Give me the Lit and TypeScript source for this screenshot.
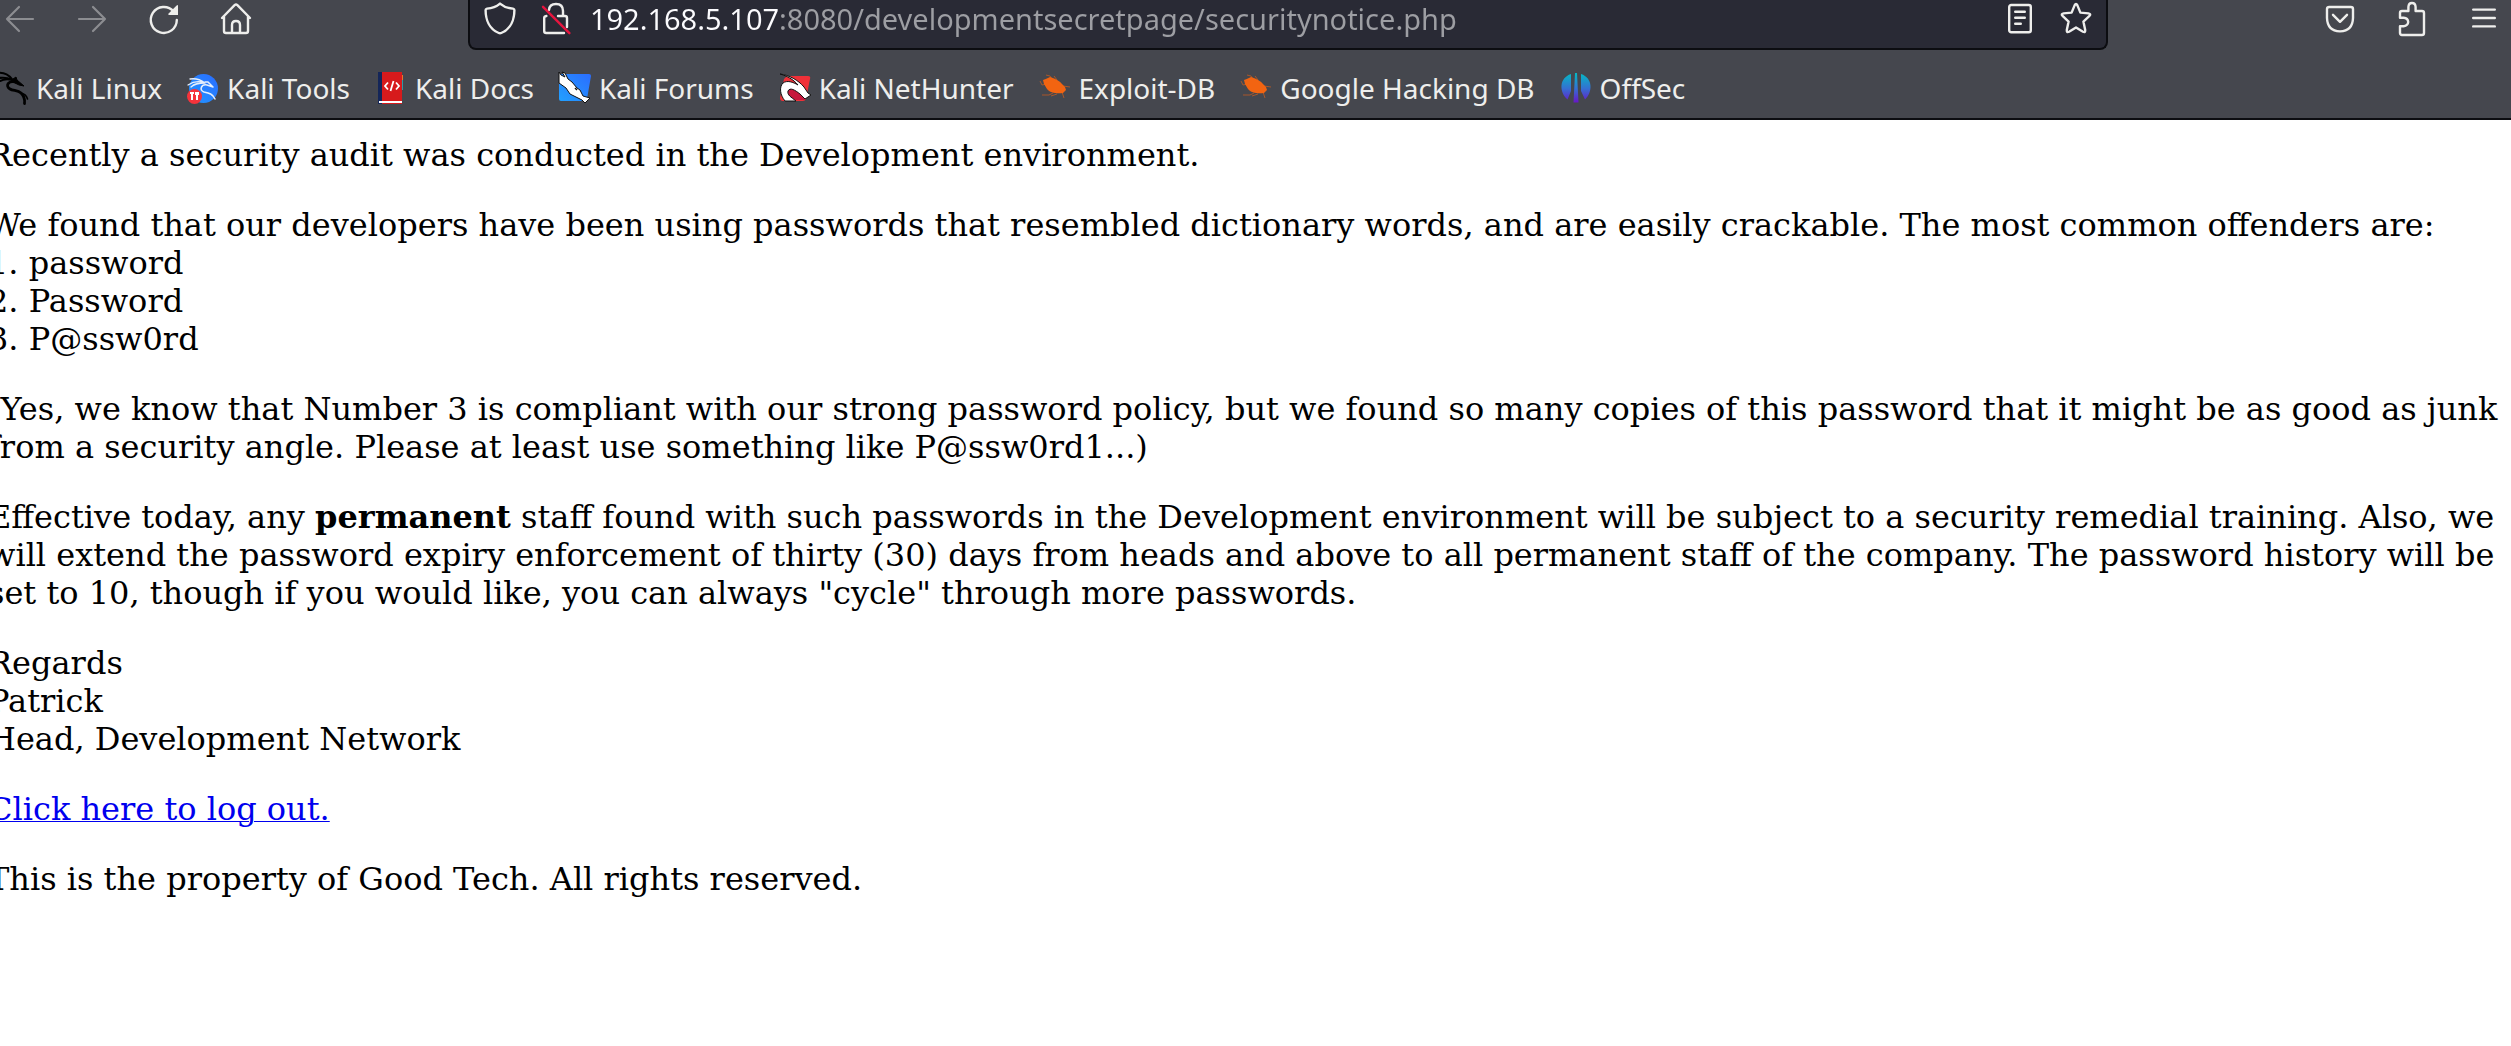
import { LitElement, html, css, svg } from "lit";
import { customElement } from "lit/decorators.js";

const icon = (body: unknown) => html`<svg class="icon" viewBox="0 0 16 16" aria-hidden="true">${body}</svg>`;
const fav = (body: unknown) => html`<svg class="icon" viewBox="0 0 32 32" aria-hidden="true">${body}</svg>`;

const bug = svg`
  <path d="M8 12 L3 13 L1 9 M13 7 L11 4 L7 3 M18 8 L15 4 M24 14 L31 15 M14 21 L10 23 L3 23 M23 20 L25 26 M18 22 L12 24" fill="none" stroke="#a8572a" stroke-width="1"/>
  <path d="M4 8 C7 7 9 6 11 5 C17 7 21 9 23 12 L26 15 L27 18 L24 21 C18 22 11 21 8 17 L5 12 Z" fill="#f26411"/>`;

const bookmarks = [
  {
    name: "Kali Linux",
    art: svg`<g fill="none" stroke="#000" stroke-linecap="round" stroke-linejoin="round">
      <path d="M0 1 C6 0 12 2 16 7 M0 7 C5 5 10 5 16 8 M4 9 C8 7 12 7 16 8" stroke-width="2"/>
      <path d="M17 7 L20 5 L21 8 L28 14 L23 13 L17 10 Z" fill="#000" stroke-width="1"/>
      <path d="M20 10 C12 8 9 14 14 17 C17 19 22 18 25 21 C28 24 29 28 28.500 31.500" stroke-width="2.800"/>
      <path d="M25 21 C29 22 31 25 31.500 27" stroke-width="1.600"/></g>`,
  },
  {
    name: "Kali Tools",
    art: svg`<defs><linearGradient id="kt" x1="1" y1="0" x2="0" y2="1"><stop offset="0" stop-color="#2a6cff"/><stop offset="1" stop-color="#2196ff"/></linearGradient></defs>
      <circle cx="16.500" cy="16.500" r="14.500" fill="url(#kt)"/>
      <g fill="none" stroke="#e6effb" stroke-linecap="round" stroke-linejoin="round"><path d="M3 7 C9 6 14 8 18 11 M1 13 C7 9 13 9 18 11 M4 15 C8 11 13 11 18 11" stroke-width="1.300"/><path d="M18 10 L21 10 L26 15 L20 13 C14 12 12 18 17 20 C22 21 26 22 28 27" stroke-width="1.500"/></g>
      <circle cx="7.500" cy="24.500" r="7.500" fill="#f5333b"/>
      <path d="M3 20 H7 V22 H6 V28 H4 V22 H3 Z M8 20 H12 V23 H11 V28 H9 V23 H8 Z" fill="#fff"/>`,
  },
  {
    name: "Kali Docs",
    art: svg`<path d="M26 3 H28 V18 H26 Z" fill="#2f9aa5"/><path d="M26 3 H28 V8 H26 Z" fill="#e8762c"/>
      <path d="M3 0 H27 V32 H3 Z" fill="#d71a1c"/><path d="M3 0 H7 V32 H3 Z" fill="#142659"/>
      <path d="M4 29 H27 V31 H4 Z" fill="#fff"/>
      <path d="M13 10.500 L10 14 L13 17.500 M21 10.500 L24 14 L21 17.500 M18.500 9 L15.500 19" fill="none" stroke="#fff" stroke-width="1.800"/>`,
  },
  {
    name: "Kali Forums",
    art: svg`<defs><linearGradient id="kf" x1="1" y1="0" x2="0" y2="1"><stop offset="0" stop-color="#2b6dff"/><stop offset="1" stop-color="#22a0ff"/></linearGradient></defs>
      <path d="M2 2 H30 Q32 2 32 4 L28 27 Q28 29 26 29 H2 Q0 29 0 27 V4 Q0 2 2 2 Z" fill="url(#kf)"/>
      <path d="M0 0 L2 3 L6 5 L3 0 L6 1 L9 7 L13 10 L18 16 L21 18 L24 24 L31 26 L26 31 L23 28 L11 22 L7 16 L0 11 Z" fill="#fff" stroke="#111" stroke-width="1"/>
      <path d="M16 16 L18 18" stroke="#111" stroke-width="1.500"/>`,
  },
  {
    name: "Kali NetHunter",
    art: svg`<path d="M8 4 H29 Q32 4 31 7 L27 27 Q26 29 24 29 H4 Q1 29 1 26 L5 7 Z" fill="#ef3038"/>
      <path d="M8 28 C6 18 10 14 16 17 L24 22 L26 28 Z" fill="#c7173d"/>
      <path d="M1 2 C10 3 19 8 25 15 L29 21 L32 23 L26 27 L21 22 C16 18 11 15 9 19 C8 23 12 25 17 29 H6 C1 23 0 15 4 11 C8 8 14 10 19 13 C14 7 8 4 1 2 Z" fill="#fff" stroke="#111" stroke-width="1"/>`,
  },
  { name: "Exploit-DB", art: bug },
  { name: "Google Hacking DB", art: bug },
  {
    name: "OffSec",
    art: svg`<defs><linearGradient id="os" gradientUnits="userSpaceOnUse" x1="0" y1="2" x2="0" y2="31"><stop offset="0" stop-color="#06b6c4"/><stop offset="0.5" stop-color="#3470d2"/><stop offset="1" stop-color="#6a12c8"/></linearGradient></defs>
      <path d="M11 2 V19 L7.500 27.500 C-1 20 -1 6 11 2 Z M21 2 C33 6 33 20 25 27.500 L21 19 Z M15 1 H17 L18.500 30.500 H13.500 Z" fill="url(#os)"/>`,
  },
];

@customElement("app-root")
export class AppRoot extends LitElement {
  static styles = css`
    :host { display: block; min-height: 100vh; overflow: hidden; background: #fff; }
    .window { margin: 0 -9px 0 -28px; }
    .chrome { background: #45474e; border-bottom: 2px solid #0c0d11; color: #eeeeec; font-family: "Noto Sans", "Open Sans", sans-serif; font-size: 28px; }
    .icon { display: block; width: 32px; height: 32px; flex: none; overflow: visible; }
    .toolbar { display: flex; align-items: flex-start; padding-left: 12px; }
    .group { display: flex; }
    .tool { display: flex; justify-content: center; box-sizing: border-box; width: 72px; height: 38px; padding: 3px 0; border: 0; background: none; color: inherit; }
    .tool:disabled { color: #8c8d91; }
    .spring { flex: 3; }
    .address { display: flex; flex: 25 1 0; box-sizing: border-box; height: 50px; padding: 0 2px; background: #292a35; border: 2px solid #0c0d11; border-top: 0; border-radius: 0 0 8px 8px; }
    .small { display: block; box-sizing: border-box; width: 56px; height: 38px; padding: 0 12px; border: 0; background: none; color: inherit; }
    .url { flex: 1; min-width: 0; height: 38px; margin: 0; padding: 0 6px; border: 0; font: inherit; font-size: 29px; line-height: 38px; color: #9d9ea3; background: linear-gradient(90deg, #fbfbfe 196px, #9d9ea3 196px) text; -webkit-text-fill-color: transparent; }
    .bookmarks { display: flex; gap: 25px; margin: 0; padding: 19px 24px 11px; list-style: none; }
    .bookmark { display: flex; align-items: center; gap: 8px; height: 38px; line-height: 38px; color: inherit; text-decoration: none; white-space: nowrap; }
    .notice { padding: 16px; font-family: "DejaVu Serif", serif; font-size: 32px; line-height: 38px; color: #000; }
    .notice p { margin: 0 0 32px; }
    .logout { color: #0000ee; text-decoration-thickness: 1px; }
  `;

  render() {
    return html`
      <div class="window">
        <header class="chrome">
          <div class="toolbar">
            <div class="group">
              <button class="tool" aria-label="Back" disabled>${icon(svg`<path d="M14.500 8 H1.500 M7.500 2 L1.500 8 L7.500 14" fill="none" stroke="currentColor" stroke-width="1.100" stroke-linecap="round" stroke-linejoin="round"/>`)}</button>
              <button class="tool" aria-label="Forward" disabled>${icon(svg`<path d="M1.500 8 H14.500 M8.500 2 L14.500 8 L8.500 14" fill="none" stroke="currentColor" stroke-width="1.100" stroke-linecap="round" stroke-linejoin="round"/>`)}</button>
              <button class="tool" aria-label="Reload">${icon(svg`<path d="M14.400 8.500 A6.500 6.500 0 1 1 12.800 4.200" fill="none" stroke="currentColor" stroke-width="1.200" stroke-linecap="round"/><path d="M15 1.200 V6 H10.600 Q9.700 5.900 10.300 5.200 L14.300 1.300 Q15 .8 15 1.200 Z" fill="currentColor"/>`)}</button>
              <button class="tool" aria-label="Home">${icon(svg`<path d="M1 7.500 L7.300 1.100 Q8 .5 8.700 1.100 L15 7.500 M2 6.800 V14 Q2 15 3 15 H13 Q14 15 14 14 V6.800 M6 15 V11 Q6 9 8 9 Q10 9 10 11 V15" fill="none" stroke="currentColor" stroke-width="1.200" stroke-linecap="round" stroke-linejoin="round"/>`)}</button>
            </div>
            <div class="spring"></div>
            <div class="address">
              <button class="small" aria-label="Tracking protection">${icon(svg`<path d="M8 .3 C10 2 12.500 2.700 14.500 2.800 C15 2.900 15.200 3 15.200 3.500 C15.200 8 13.500 13 8.600 15 Q8 15.300 7.400 15 C2.500 13 .8 8 .8 3.500 C.8 3 1 2.900 1.500 2.800 C3.500 2.700 6 2 8 .3 Z" fill="none" stroke="currentColor" stroke-width="1.200" stroke-linejoin="round"/>`)}</button>
              <button class="small" aria-label="Connection not secure">${icon(svg`<path d="M4.500 3.500 Q4.700 .5 8 .5 Q11.500 .5 11.500 4 V6.500 M3.200 6.500 Q2.100 6.700 2.100 7.500 V14 Q2.100 15 3.100 15 H12 M9 6.500 H12.500 Q13.500 6.500 13.500 7.500 V12" fill="none" stroke="currentColor" stroke-width="1.200" stroke-linecap="round"/><path d="M1.500 1.900 L14.700 15.100" stroke="#e6153f" stroke-width="1.200" stroke-linecap="round"/>`)}</button>
              <input class="url" type="text" aria-label="Address" .value=${"192.168.5.107:8080/developmentsecretpage/securitynotice.php"} />
              <button class="small" aria-label="Reader view">${icon(svg`<rect x="2.600" y="1" width="10.800" height="13.600" rx="1" fill="none" stroke="currentColor" stroke-width="1.200"/><path d="M5.600 4.400 H10.400 M5.600 7.400 H10.400 M5.600 10.400 H8.400" stroke="currentColor" stroke-width="1.200" stroke-linecap="round"/>`)}</button>
              <button class="small" aria-label="Bookmark this page">${icon(svg`<path d="M7.300 1.200 Q8 -.2 8.700 1.200 L10.200 4.800 L14.200 5.200 Q15.800 5.500 14.600 6.600 L11.700 9.300 L12.600 13.500 Q12.700 15 11.500 14.400 L8 12.200 L4.500 14.400 Q3.300 15 3.400 13.500 L4.300 9.300 L1.400 6.600 Q.2 5.500 1.800 5.200 L5.800 4.800 Z" fill="none" stroke="currentColor" stroke-width="1.200" stroke-linejoin="round"/>`)}</button>
            </div>
            <div class="spring"></div>
            <div class="group">
              <button class="tool" aria-label="Save to Pocket">${icon(svg`<path d="M2.600 2 H13.400 Q14.500 2 14.500 3 V7.500 Q14.300 14 8 14.200 Q1.700 14 1.500 7.500 V3 Q1.500 2 2.600 2 Z M4.500 5.900 L8 9.400 L11.500 5.900" fill="none" stroke="currentColor" stroke-width="1.200" stroke-linecap="round" stroke-linejoin="round"/>`)}</button>
              <button class="tool" aria-label="Extensions">${icon(svg`<path d="M2 7.400 V5 Q2 4 3 4 H6.200 V2 Q6.300 0 8 0 Q9.700 0 9.800 2 V4 H13 Q14 4 14 5 V15 Q14 16 13 16 H3 Q2 16 2 15 V11.600 H3.800 Q6 11.300 6.100 9.500 Q6 7.600 3.800 7.400 Z" fill="none" stroke="currentColor" stroke-width="1.200" stroke-linejoin="round"/>`)}</button>
              <button class="tool" aria-label="Open application menu">${icon(svg`<path d="M2.600 3.300 H13.400 M2.600 7.500 H13.400 M2.600 11.700 H13.400" stroke="currentColor" stroke-width="1.200" stroke-linecap="round"/>`)}</button>
            </div>
          </div>
          <nav aria-label="Bookmarks">
            <ul class="bookmarks">
              ${bookmarks.map((b) => html`<li><a class="bookmark" href="#">${fav(b.art)}<span>${b.name}</span></a></li>`)}
            </ul>
          </nav>
        </header>
        <main class="notice">
          <p>Recently a security audit was conducted in the Development environment.</p>
          <p>We found that our developers have been using passwords that resembled dictionary words, and are easily crackable. The most common offenders are:<br />1. password<br />2. Password<br />3. P@ssw0rd</p>
          <p>(Yes, we know that Number 3 is compliant with our strong password policy, but we found so many copies of this password that it might be as good as junk from a security angle. Please at least use something like P@ssw0rd1...)</p>
          <p>Effective today, any <b>permanent</b> staff found with such passwords in the Development environment will be subject to a security remedial training. Also, we will extend the password expiry enforcement of thirty (30) days from heads and above to all permanent staff of the company. The password history will be set to 10, though if you would like, you can always "cycle" through more passwords.</p>
          <p>Regards<br />Patrick<br />Head, Development Network</p>
          <p><a class="logout" href="#">Click here to log out.</a></p>
          <p>This is the property of Good Tech. All rights reserved.</p>
        </main>
      </div>
    `;
  }
}
